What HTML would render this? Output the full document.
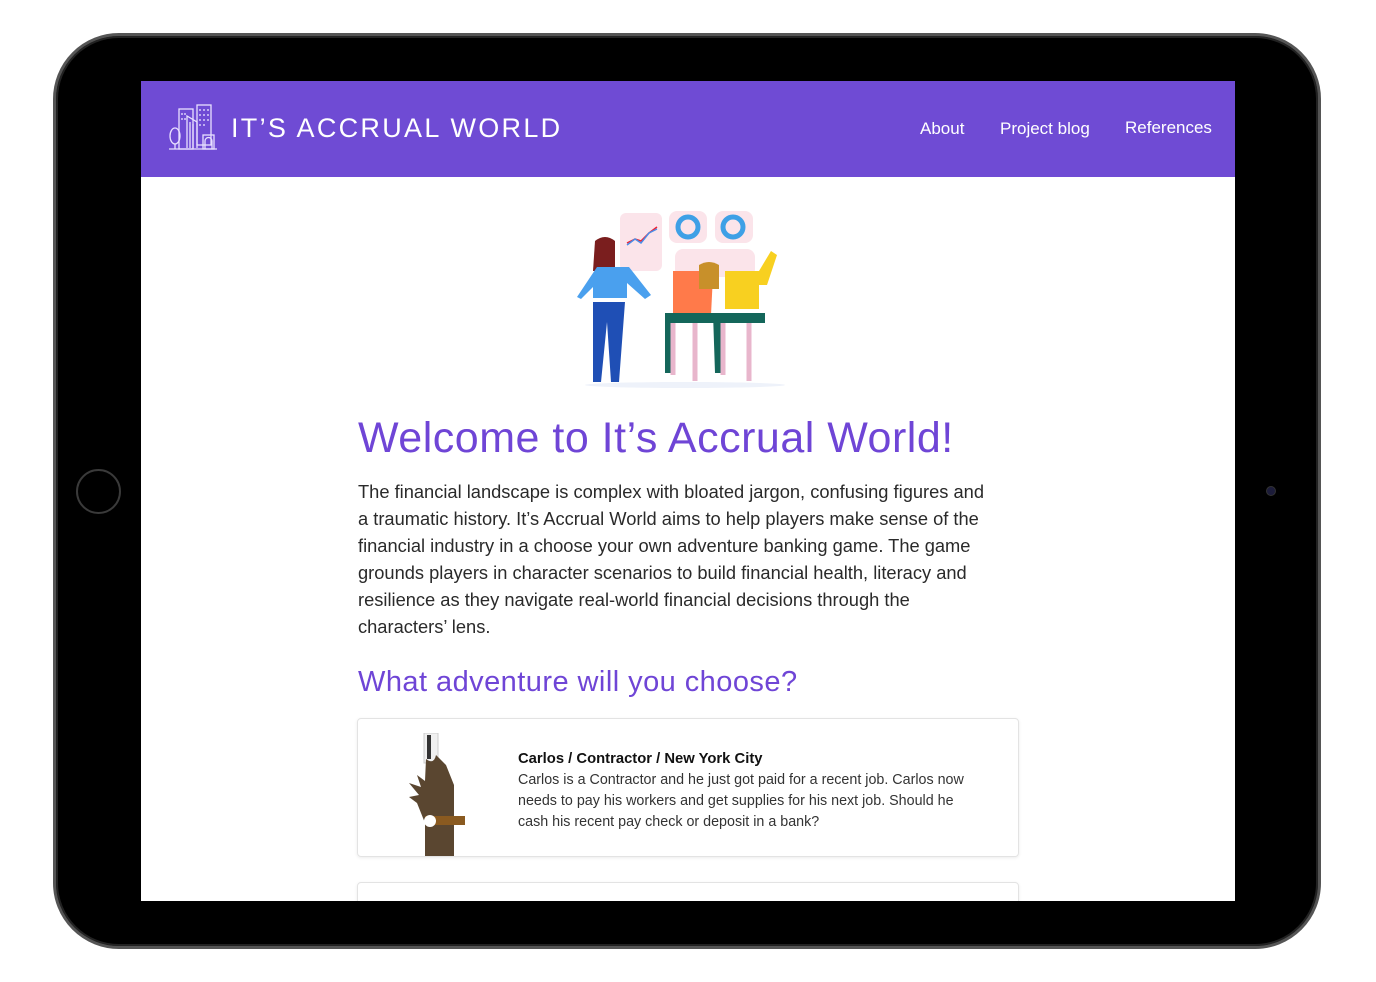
<!DOCTYPE html>
<html><head><meta charset="utf-8">
<style>
*{margin:0;padding:0;box-sizing:border-box}
body{width:1376px;height:982px;background:#fff;position:relative;overflow:hidden;font-family:"Liberation Sans",sans-serif}
.frame{position:absolute;left:53px;top:33px;width:1268px;height:916px;background:#000;border-radius:66px;border:3px solid #555;box-shadow:inset 0 0 0 2px #222}
.home{position:absolute;left:76px;top:469px;width:45px;height:45px;border-radius:50%;border:2px solid #3a3a3a}
.cam{position:absolute;left:1266px;top:486px;width:10px;height:10px;border-radius:50%;background:#1c1c3a;border:1px solid #333}
.screen{position:absolute;left:141px;top:81px;width:1094px;height:820px;background:#fff;overflow:hidden}
.hdr{position:absolute;left:0;top:0;width:1094px;height:96px;background:#6f4bd4}
.title{position:absolute;left:90px;top:32px;color:#fff;font-size:27px;letter-spacing:2.3px;font-weight:400}
.nav{position:absolute;top:38px;color:#fff;font-size:17px}
h1{position:absolute;left:217px;top:333px;color:#6f45d6;font-size:43px;font-weight:400;letter-spacing:0.5px}
.p{position:absolute;left:217px;top:397px;width:700px;color:#2a2a2a;font-size:18.3px;line-height:27px;font-weight:300;white-space:nowrap}
h2{position:absolute;left:217px;top:585px;color:#6f45d6;font-size:29px;font-weight:400;letter-spacing:0.45px}
.card{position:absolute;left:216px;top:637px;width:662px;height:139px;border:1px solid #e3e3e3;border-radius:4px;box-shadow:0 1px 3px rgba(0,0,0,.08);overflow:hidden}
.card2{top:801px;height:60px}
.ct{position:absolute;left:160px;top:30px;width:480px;font-size:14.3px;line-height:21px;color:#333;white-space:nowrap}
.ct b{color:#111;font-size:14.8px}
</style></head><body>
<div class="frame"></div>
<div class="home"></div>
<div class="cam"></div>
<div class="screen">
 <div class="hdr">
  <svg style="position:absolute;left:26px;top:22px" width="52" height="52" viewBox="0 0 52 50" fill="none" stroke="#e8e0ff" stroke-width="1.3">
   <rect x="12" y="5" width="14" height="40"/><rect x="30" y="1" width="14" height="40"/>
   <path d="M20 44V12l10 6v26"/><path d="M23 44V18M26 44V20"/>
   <rect x="36" y="31" width="11" height="14"/><path d="M38 45v-8a3.5 3.5 0 0 1 7 0v8"/>
   <ellipse cx="8" cy="32" rx="5" ry="8"/><path d="M8 40v5M2 45h48"/>
   <path d="M15 9v2M18 9v2M15 14v2M18 14v2M33 5v2M37 5v2M41 5v2M33 10v2M37 10v2M41 10v2M33 15v2M37 15v2M41 15v2M33 20v2M37 20v2"/>
  </svg>
  <div class="title">IT’S ACCRUAL WORLD</div>
  <div class="nav" style="left:779px">About</div>
  <div class="nav" style="left:859px">Project blog</div>
  <div class="nav" style="left:984px;top:37px">References</div>
 </div>
 <svg style="position:absolute;left:424px;top:128px" width="246" height="182" viewBox="0 0 246 182">
  <rect x="55" y="4" width="42" height="58" rx="6" fill="#fbe4ea"/>
  <path d="M62 34l8-4 6 2 8-8 8-6" stroke="#e23" fill="none" stroke-width="1.5"/>
  <path d="M62 36l8-6 6 4 8-10 8-4" stroke="#4a8ee8" fill="none" stroke-width="1.5"/>
  <rect x="104" y="2" width="38" height="32" rx="8" fill="#fbe4ea"/>
  <circle cx="123" cy="18" r="10" fill="none" stroke="#3ea0e6" stroke-width="5"/>
  <rect x="150" y="2" width="38" height="32" rx="8" fill="#fbe4ea"/>
  <circle cx="168" cy="18" r="10" fill="none" stroke="#3ea0e6" stroke-width="5"/>
  <rect x="110" y="40" width="80" height="28" rx="8" fill="#fbe4ea"/>
  <path d="M30 32q10-8 20 0v30h-22z" fill="#7a1e1e"/>
  <path d="M12 88l20-30h32l22 28-6 4-18-16v15H28V78l-12 12z" fill="#4aa0ee"/>
  <path d="M28 93h32l-6 80h-8l-4-60-6 60h-8z" fill="#1f4fb5"/>
  <path d="M108 62h34l6 4-2 40h-38z" fill="#ff7a4a"/>
  <path d="M134 56q10-6 20 0v24h-20z" fill="#c8902a"/>
  <path d="M160 62h34l12-20 6 4-10 30h-8v24h-34z" fill="#f8d020"/>
  <path d="M100 104h50v10h-40v50h-10zM148 104h52v10h-40v50h-10z" fill="#14665a"/>
  <path d="M108 114v58M130 114v58M158 114v58M184 114v58" stroke="#e8b6cc" stroke-width="5"/>
  <path d="M90 170h30M140 170h30" stroke="#fff" stroke-width="8"/>
  <ellipse cx="120" cy="176" rx="100" ry="3" fill="#eef2fa"/>
 </svg>
 <h1>Welcome to It’s Accrual World!</h1>
 <div class="p">The financial landscape is complex with bloated jargon, confusing figures and<br>a traumatic history. It’s Accrual World aims to help players make sense of the<br>financial industry in a choose your own adventure banking game. The game<br>grounds players in character scenarios to build financial health, literacy and<br>resilience as they navigate real-world financial decisions through the<br>characters’ lens.</div>
 <h2>What adventure will you choose?</h2>
 <div class="card">
  <svg style="position:absolute;left:40px;top:14px" width="70" height="125" viewBox="0 0 70 125">
   <rect x="26" y="0" width="14" height="30" fill="#f0f0f0" stroke="#ccc"/>
   <rect x="29" y="2" width="4" height="24" fill="#333"/>
   <path d="M28 26q8 6 10-4l10 10 8 20v73H27V90l-8-20-8-6 10-2-10-12 12 4-4-12 8 6z" fill="#5a4630"/>
   <rect x="27" y="83" width="40" height="9" fill="#8a5a20"/>
   <circle cx="32" cy="88" r="6" fill="#fff"/>
  </svg>
  <div class="ct"><b>Carlos / Contractor / New York City</b><br>Carlos is a Contractor and he just got paid for a recent job. Carlos now<br>needs to pay his workers and get supplies for his next job. Should he<br>cash his recent pay check or deposit in a bank?</div>
 </div>
 <div class="card card2"></div>
</div>
</body></html>
